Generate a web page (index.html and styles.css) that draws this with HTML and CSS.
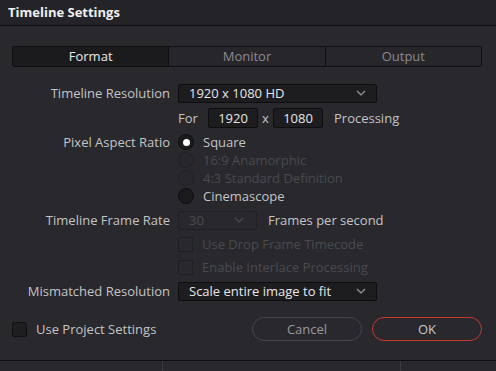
FILE: index.html
```html
<!DOCTYPE html>
<html lang="en">
<head>
    <meta charset="UTF-8">
    <title>Timeline Settings</title>
    <link rel="stylesheet" href="styles.css">
</head>
<body>
    <div class="dialog">
        <header class="title-bar">Timeline Settings</header>

        <div class="tabs">
            <div class="tab active">Format</div>
            <div class="tab">Monitor</div>
            <div class="tab">Output</div>
        </div>

        <div class="form">
            <div class="row">
                <label class="label">Timeline Resolution</label>
                <div class="select wide">
                    <span>1920 x 1080 HD</span>
                    <svg class="chevron" width="10" height="6" viewBox="0 0 10 6"><polyline points="1,1 5,5 9,1"/></svg>
                </div>
            </div>

            <div class="row">
                <span class="label"></span>
                <span class="text for">For</span>
                <div class="num">1920</div>
                <span class="text times">x</span>
                <div class="num">1080</div>
                <span class="text proc">Processing</span>
            </div>

            <div class="row radios">
                <label class="label">Pixel Aspect Ratio</label>
                <div class="radio-list">
                    <div class="radio-row"><span class="radio checked"></span><span>Square</span></div>
                    <div class="radio-row disabled"><span class="radio"></span><span>16:9 Anamorphic</span></div>
                    <div class="radio-row disabled"><span class="radio"></span><span>4:3 Standard Definition</span></div>
                    <div class="radio-row"><span class="radio"></span><span>Cinemascope</span></div>
                </div>
            </div>

            <div class="row">
                <label class="label">Timeline Frame Rate</label>
                <div class="select small disabled">
                    <span>30</span>
                    <svg class="chevron" width="10" height="6" viewBox="0 0 10 6"><polyline points="1,1 5,5 9,1"/></svg>
                </div>
                <span class="text fps">Frames per second</span>
            </div>

            <div class="row check-row">
                <span class="label"></span>
                <span class="checkbox disabled"></span>
                <span class="check-text disabled">Use Drop Frame Timecode</span>
            </div>

            <div class="row check-row">
                <span class="label"></span>
                <span class="checkbox disabled"></span>
                <span class="check-text disabled">Enable Interlace Processing</span>
            </div>

            <div class="row">
                <label class="label">Mismatched Resolution</label>
                <div class="select wide">
                    <span>Scale entire image to fit</span>
                    <svg class="chevron" width="10" height="6" viewBox="0 0 10 6"><polyline points="1,1 5,5 9,1"/></svg>
                </div>
            </div>
        </div>

        <div class="footer">
            <span class="checkbox"></span>
            <span class="footer-text">Use Project Settings</span>
            <div class="buttons">
                <button class="btn">Cancel</button>
                <button class="btn ok">OK</button>
            </div>
        </div>

        <div class="bottom-strip">
            <div class="cell first"></div>
            <div class="cell second"></div>
            <div class="cell"></div>
        </div>
    </div>
</body>
</html>
```

FILE: styles.css
```css
body {
    margin: 0;
    background-color: #28282d;
    font-family: "Open Sans", "Noto Sans", sans-serif;
    font-size: 13px;
    color: #c4c4c6;
}
.dialog {
    width: 496px;
    height: 371px;
    overflow: hidden;
    background-color: #28282d;
}
.title-bar {
    height: 25px;
    line-height: 24px;
    padding-left: 8px;
    background-color: #232328;
    border-bottom: 1px solid #0e0e10;
    color: #f0f0f0;
    font-weight: 700;
    font-size: 13px;
}
.tabs {
    display: flex;
    margin: 20px 14px 0 12px;
    height: 19px;
    border: 1px solid #0f0f11;
    border-radius: 2px;
    background-color: #26262b;
}
.tab {
    flex: 1;
    text-align: center;
    line-height: 19px;
    color: #8a8a8e;
    border-left: 1px solid #0f0f11;
}
.tab:first-child {
    border-left: none;
}
.tab.active {
    background-color: #1b1b1e;
    color: #e8e8ea;
}
.form {
    margin-top: 16px;
    display: flex;
    flex-direction: column;
    gap: 5px;
}
.row {
    display: flex;
    align-items: center;
    height: 20px;
}
.label {
    width: 178px;
    flex-shrink: 0;
    text-align: right;
    padding-right: 8px;
    box-sizing: border-box;
    color: #c4c4c6;
}
.select {
    height: 19px;
    box-sizing: border-box;
    display: flex;
    align-items: center;
    justify-content: space-between;
    padding: 0 10px 0 10px;
    background-color: #1d1d20;
    border: 1px solid #0e0e10;
    border-radius: 2px;
    color: #e6e6e8;
}
.select.wide {
    width: 199px;
}
.select.small {
    width: 79px;
    padding-left: 10px;
    padding-right: 12px;
}
.select.disabled {
    background-color: #28282d;
    border-color: #202024;
    color: #4a4a4f;
}
.chevron {
    fill: none;
    stroke: #9a9a9e;
    stroke-width: 1.2;
}
.select.disabled .chevron {
    stroke: #4a4a4f;
}
.text {
    color: #c4c4c6;
}
.for {
    width: 30px;
    flex-shrink: 0;
}
.num {
    width: 50px;
    height: 20px;
    box-sizing: border-box;
    background-color: #1d1d20;
    border: 1px solid #0e0e10;
    border-radius: 2px;
    text-align: center;
    line-height: 18px;
    color: #e6e6e8;
}
.times {
    width: 15px;
    flex-shrink: 0;
    text-align: center;
}
.proc {
    margin-left: 11px;
}
.fps {
    margin-left: 11px;
}
.row.radios {
    height: 72px;
    align-items: flex-start;
}
.row.radios .label {
    line-height: 18px;
}
.radio-list {
    display: flex;
    flex-direction: column;
}
.radio-row {
    display: flex;
    align-items: center;
    height: 18px;
    gap: 9px;
    color: #c4c4c6;
}
.radio-row.disabled {
    color: #4a4a4f;
}
.radio {
    width: 16px;
    height: 16px;
    box-sizing: border-box;
    border-radius: 50%;
    background-color: #1b1b1e;
    border: 1px solid #0f0f11;
    display: flex;
    align-items: center;
    justify-content: center;
}
.radio-row.disabled .radio {
    background-color: #27272c;
    border-color: #222226;
}
.radio.checked::after {
    content: "";
    width: 7px;
    height: 7px;
    border-radius: 50%;
    background-color: #ffffff;
}
.check-row {
    height: 18px;
}
.checkbox {
    width: 15px;
    height: 15px;
    box-sizing: border-box;
    background-color: #1e1e21;
    border: 1px solid #101012;
    border-radius: 2px;
    flex-shrink: 0;
}
.checkbox.disabled {
    background-color: #28282d;
    border-color: #1f1f23;
}
.check-text {
    margin-left: 9px;
}
.check-text.disabled {
    color: #4a4a4f;
}
.footer {
    display: flex;
    align-items: center;
    margin-top: 16px;
    padding-left: 12px;
    height: 24px;
}
.footer-text {
    margin-left: 9px;
    color: #c4c4c6;
}
.buttons {
    margin-left: auto;
    margin-right: 14px;
    display: flex;
    gap: 10px;
}
.btn {
    width: 110px;
    height: 24px;
    border-radius: 12px;
    background-color: #28282d;
    border: 1px solid #444449;
    color: #9a9a9e;
    font-family: "Open Sans", "Noto Sans", sans-serif;
    font-size: 13px;
    padding: 0;
}
.btn.ok {
    border-color: #c6392f;
    color: #c8c8ca;
}
.bottom-strip {
    display: flex;
    margin-top: 19px;
    height: 20px;
    border-top: 1px solid #0e0e10;
}
.cell {
    flex: none;
}
.cell.first {
    width: 162px;
    border-right: 1px solid #3a3a3f;
}
.cell.second {
    width: 237px;
    border-right: 1px solid #3a3a3f;
}
```
